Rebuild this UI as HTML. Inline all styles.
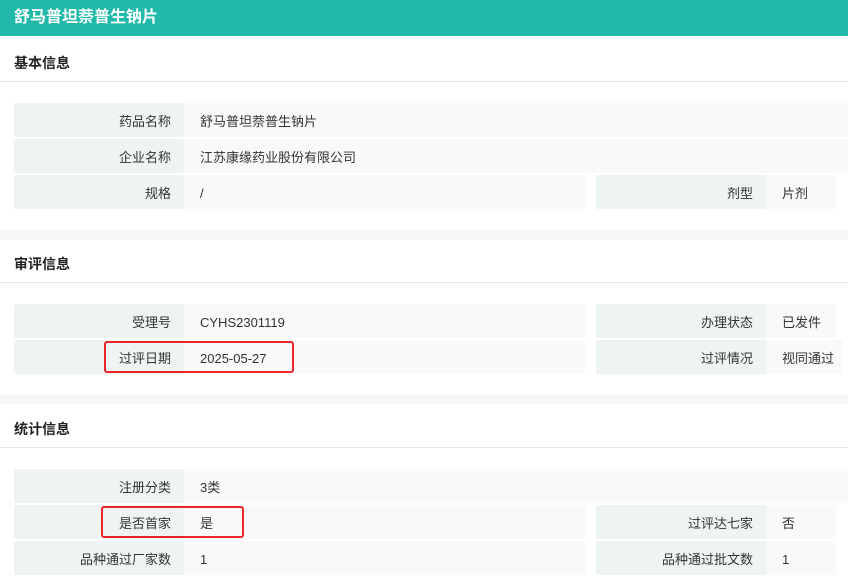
<!DOCTYPE html>
<html><head><meta charset="utf-8"><style>
body{margin:0;width:848px;height:576px;overflow:hidden;background:#fff;font-family:"Liberation Sans","Noto Sans CJK SC",sans-serif;color:#333;position:relative}
.a{position:absolute;box-sizing:border-box}
.hd{left:0;top:0;width:848px;height:36px;background:#21b9a9;color:#fff;font-weight:bold;font-size:16px;line-height:36px;padding-left:14px}
.st{left:14px;font-size:14px;font-weight:bold;color:#222}
.ln{left:0;width:848px;height:1px;background:#e8e8e8}
.band{left:0;width:848px;height:10px;background:#f5f6f6}
.l{background:#eef4f4;font-size:13px;text-align:right;padding-right:13px;padding-top:2px;line-height:34px;height:34px;border-radius:2px}
.v{background:#f9f9f9;font-size:13px;padding-left:16px;padding-top:2px;line-height:34px;height:34px}
.red{border:2px solid #e8262b;border-radius:3px}
</style></head><body>
<div class="a hd">舒马普坦萘普生钠片</div>

<div class="a st" style="top:53px">基本信息</div>
<div class="a ln" style="top:81px"></div>
<div class="a l" style="left:14px;top:103px;width:170px">药品名称</div>
<div class="a v" style="left:184px;top:103px;width:664px">舒马普坦萘普生钠片</div>
<div class="a l" style="left:14px;top:139px;width:170px">企业名称</div>
<div class="a v" style="left:184px;top:139px;width:664px">江苏康缘药业股份有限公司</div>
<div class="a l" style="left:14px;top:175px;width:170px">规格</div>
<div class="a v" style="left:184px;top:175px;width:401px">/</div>
<div class="a l" style="left:596px;top:175px;width:170px">剂型</div>
<div class="a v" style="left:766px;top:175px;width:70px">片剂</div>

<div class="a band" style="top:230px"></div>
<div class="a st" style="top:254px">审评信息</div>
<div class="a ln" style="top:282px"></div>
<div class="a l" style="left:14px;top:304px;width:170px">受理号</div>
<div class="a v" style="left:184px;top:304px;width:401px">CYHS2301119</div>
<div class="a l" style="left:596px;top:304px;width:170px">办理状态</div>
<div class="a v" style="left:766px;top:304px;width:70px">已发件</div>
<div class="a l" style="left:14px;top:340px;width:170px">过评日期</div>
<div class="a v" style="left:184px;top:340px;width:401px">2025-05-27</div>
<div class="a l" style="left:596px;top:340px;width:170px">过评情况</div>
<div class="a v" style="left:766px;top:340px;width:76px">视同通过</div>
<div class="a red" style="left:104px;top:341px;width:190px;height:32px"></div>

<div class="a band" style="top:394px"></div>
<div class="a st" style="top:419px">统计信息</div>
<div class="a ln" style="top:447px"></div>
<div class="a l" style="left:14px;top:469px;width:170px">注册分类</div>
<div class="a v" style="left:184px;top:469px;width:664px">3类</div>
<div class="a l" style="left:14px;top:505px;width:170px">是否首家</div>
<div class="a v" style="left:184px;top:505px;width:401px">是</div>
<div class="a l" style="left:596px;top:505px;width:170px">过评达七家</div>
<div class="a v" style="left:766px;top:505px;width:70px">否</div>
<div class="a red" style="left:101px;top:506px;width:143px;height:32px"></div>
<div class="a l" style="left:14px;top:541px;width:170px">品种通过厂家数</div>
<div class="a v" style="left:184px;top:541px;width:401px">1</div>
<div class="a l" style="left:596px;top:541px;width:170px">品种通过批文数</div>
<div class="a v" style="left:766px;top:541px;width:70px">1</div>
</body></html>
